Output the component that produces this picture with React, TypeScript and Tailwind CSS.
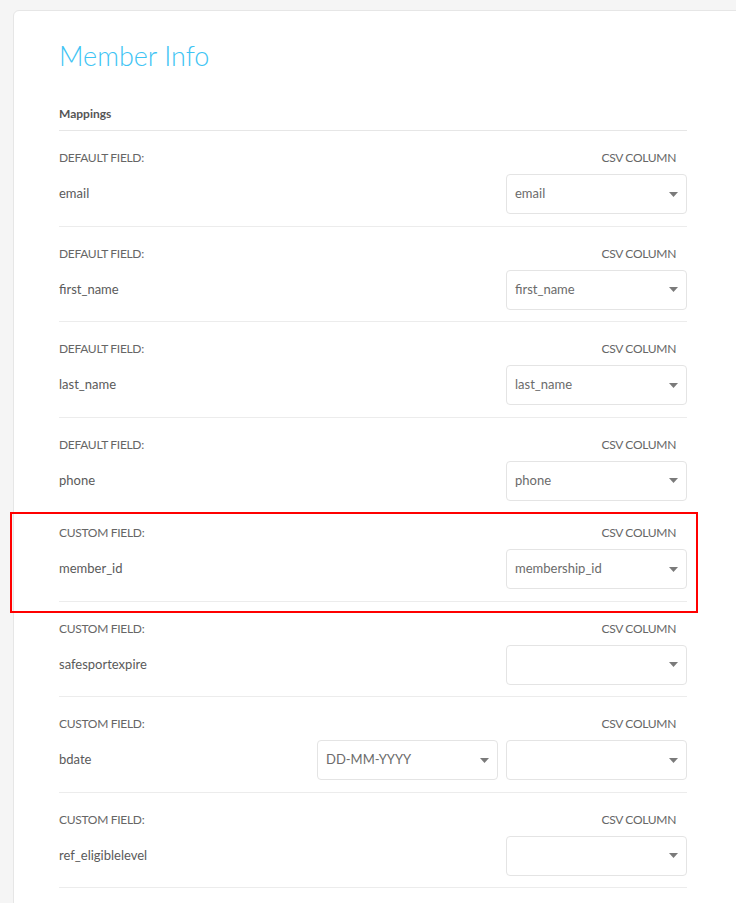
// Member Info — CSV column mapping card

type Row = {
  kind: 'DEFAULT FIELD:' | 'CUSTOM FIELD:';
  name: string;
  value: string;
  format?: string;
  highlight?: boolean;
};

const rows: Row[] = [
  { kind: 'DEFAULT FIELD:', name: 'email', value: 'email' },
  { kind: 'DEFAULT FIELD:', name: 'first_name', value: 'first_name' },
  { kind: 'DEFAULT FIELD:', name: 'last_name', value: 'last_name' },
  { kind: 'DEFAULT FIELD:', name: 'phone', value: 'phone' },
  { kind: 'CUSTOM FIELD:', name: 'member_id', value: 'membership_id', highlight: true },
  { kind: 'CUSTOM FIELD:', name: 'safesportexpire', value: '' },
  { kind: 'CUSTOM FIELD:', name: 'bdate', value: '', format: 'DD-MM-YYYY' },
  { kind: 'CUSTOM FIELD:', name: 'ref_eligiblelevel', value: '' },
];

function Select({ value }: { value: string }) {
  return (
    <div className="w-[181px] h-10 flex items-center justify-between pl-2 pr-[8px] border border-[#e4e4e4] rounded-[4px] bg-white text-[13px] text-[#6b6b6b]">
      <span>{value}</span>
      <svg width="9" height="5" viewBox="0 0 9 5">
        <polygon points="0,0 9,0 4.5,5" fill="#7a7a7a" />
      </svg>
    </div>
  );
}

function MappingRow({ row }: { row: Row }) {
  return (
    <div
      className={
        'relative border-b border-[#ececec] pb-[11.5px] ' +
        (row.highlight ? 'pt-[12px]' : 'pt-[19px]')
      }
    >
      <div className="h-4 flex items-center justify-between text-[12px] text-[#666] tracking-[-0.3px]">
        <span>{row.kind}</span>
        <span className="pr-[11px]">CSV COLUMN</span>
      </div>
      <div className="mt-2 flex items-center justify-between">
        <span className="text-[13px] text-[#5a5a5a]">{row.name}</span>
        <div className="flex gap-2">
          {row.format && <Select value={row.format} />}
          <Select value={row.value} />
        </div>
      </div>
      {/* annotation box */}
      {row.highlight && (
        <div className="absolute left-[-49px] right-[-11px] top-[-1px] bottom-[-12px] border-2 border-[#ff0000]" />
      )}
    </div>
  );
}

export default function App() {
  return (
    <div
      className="min-h-screen bg-[#f5f5f5] pt-[10px] pl-[13px] overflow-hidden"
      style={{ fontFamily: 'Lato, "Open Sans", sans-serif' }}
    >
      <div className="w-[760px] bg-white border border-[#e6e6e6] rounded-md pl-[45px] pt-[28px] pb-10">
        <div className="w-[628px]">
          <h1 className="text-[27px] leading-[34px] font-light text-[#3ec4f4]">Member Info</h1>
          <div className="mt-[33px] pb-2 border-b border-[#e6e6e6] text-[12px] leading-4 font-bold text-[#555]">
            Mappings
          </div>
          {rows.map((r) => (
            <MappingRow key={r.name} row={r} />
          ))}
        </div>
      </div>
    </div>
  );
}
